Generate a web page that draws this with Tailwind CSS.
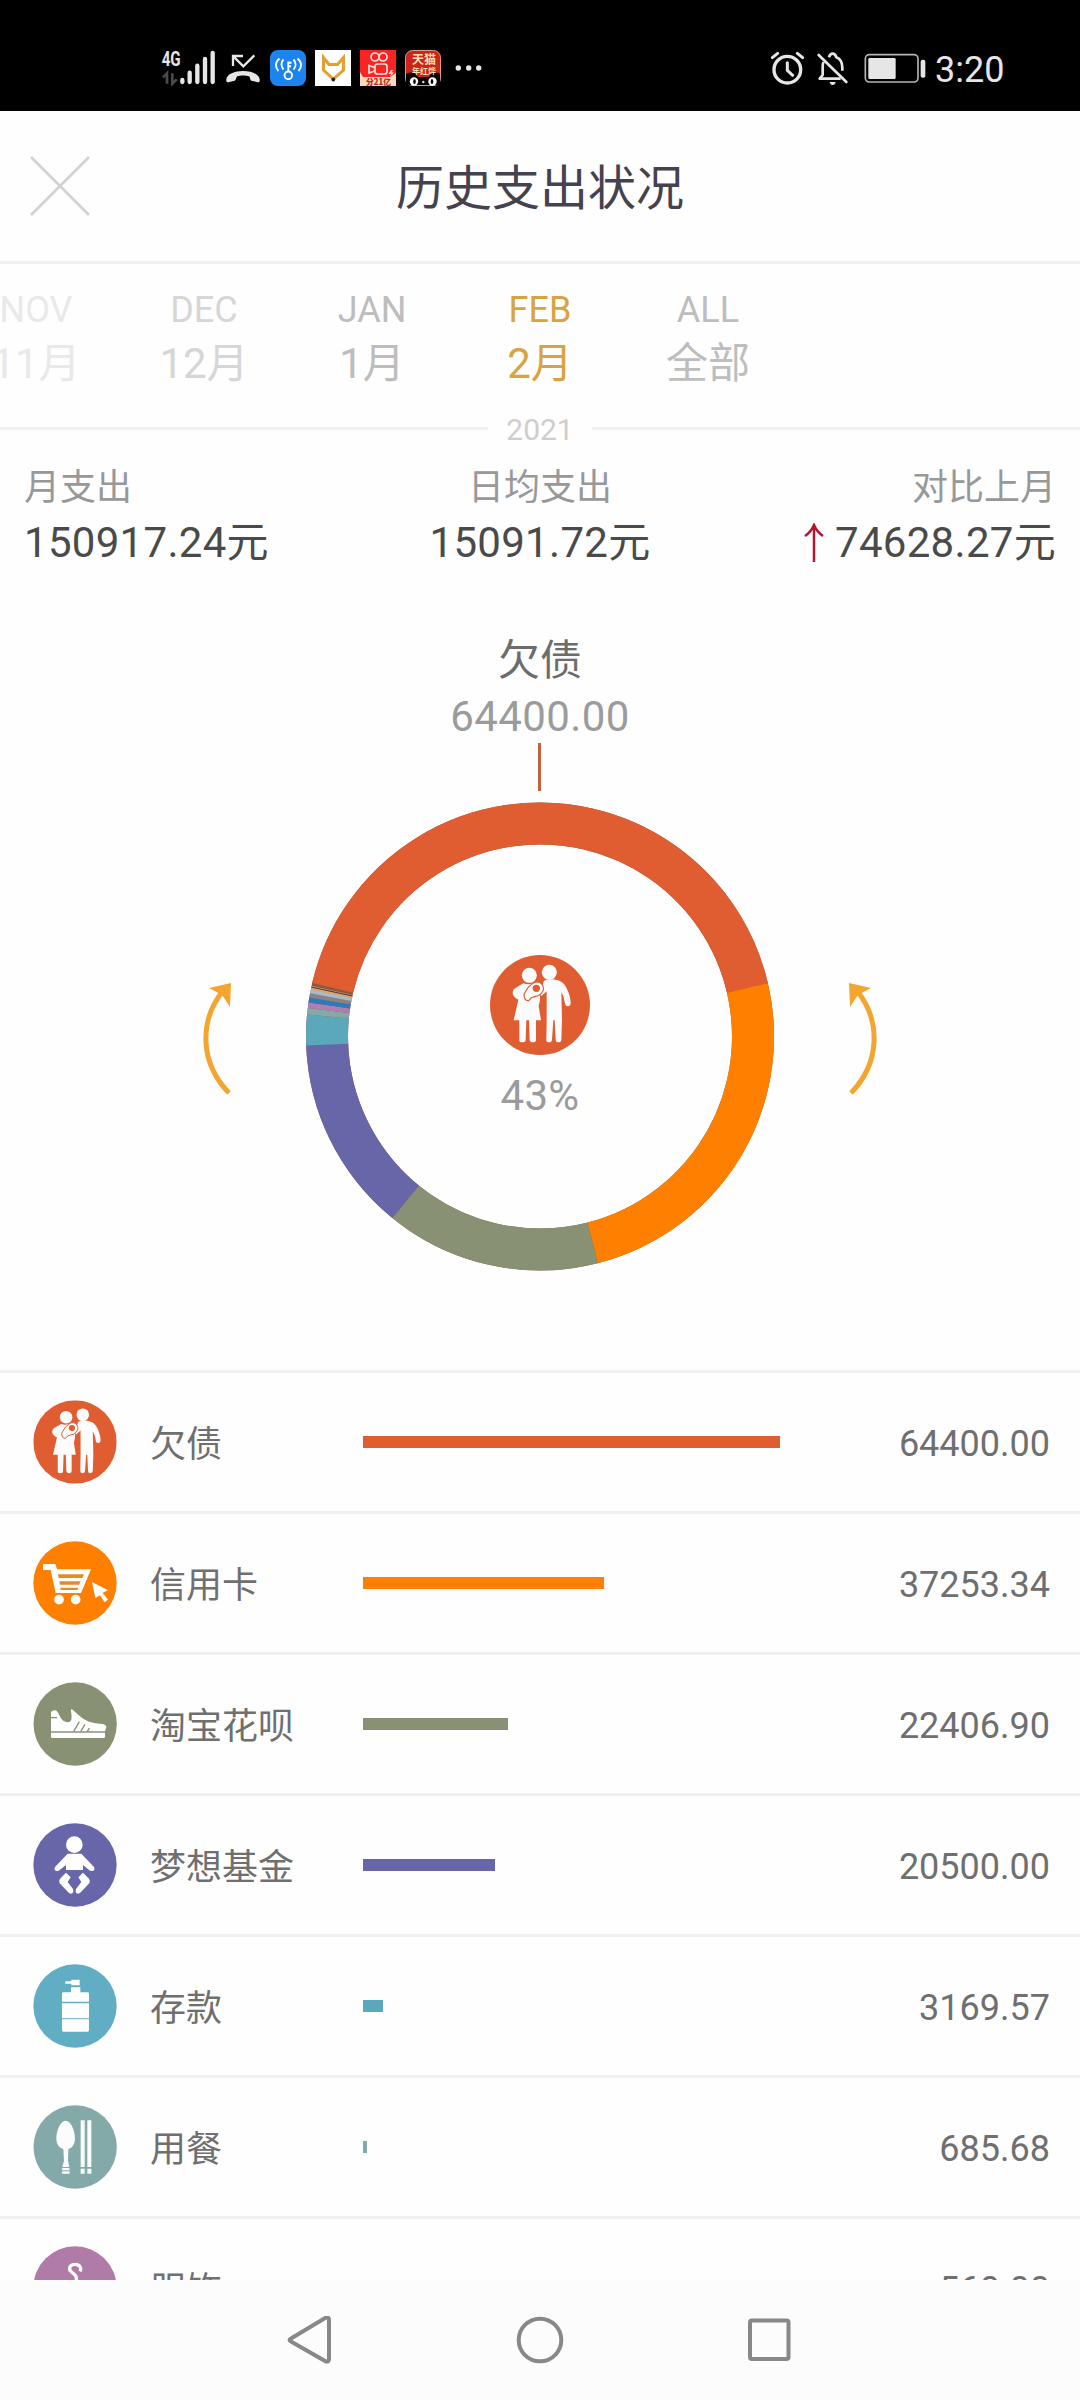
<!DOCTYPE html>
<html lang="zh">
<head>
<meta charset="utf-8">
<title>历史支出状况</title>
<script src="https://cdn.jsdelivr.net/npm/@tailwindcss/browser@4"></script>
</head>
<body class="bg-white">
<div class="flex h-[2400px] w-[1080px] flex-col overflow-hidden bg-[#fefefe] font-['Roboto','Noto_Sans_CJK_SC',sans-serif]">

  <!-- Status bar -->
  <header class="flex h-[111px] shrink-0 items-start bg-black pt-[50px] text-[#e6e6e6]">
    <svg class="ml-[160px] h-9 w-[56px]" viewBox="60 60 168 108">
      <text x="65" y="107" font-family="Roboto" font-weight="700" font-size="60" textLength="57" lengthAdjust="spacingAndGlyphs" fill="#e6e6e6">4G</text>
      <path d="M69 142 81 130V161M97 130V161L110 148" fill="none" stroke="#4a4a4a" stroke-width="8"/>
      <g stroke="#e6e6e6" stroke-width="13" stroke-linecap="round"><path d="M127 150V156M149 128V156M172 107V156M195 87V156M218 69V156"/></g>
    </svg>
    <svg class="ml-[9px] h-9 w-[36px]" viewBox="256 60 108 108">
      <path d="M280 108V78H310M281 79 311 109 344 76" fill="none" stroke="#e6e6e6" stroke-width="7"/>
      <path d="M260 148C262 132 285 123 310 123S358 132 360 148C361 158 357 158 351 156L335 152C330 150 332 141 328 139C318 136 302 136 293 139C289 141 290 150 285 152L269 156C262 158 259 156 260 148Z" fill="#e6e6e6"/>
    </svg>
    <svg class="ml-[9px] size-9" viewBox="0 0 36 36">
      <rect width="36" height="36" rx="8" fill="#1b84ee"/>
      <g fill="none" stroke="#fff" stroke-width="1.9"><circle cx="18.3" cy="25.3" r="3.8"/><path d="M18.3 21.5V11.5M18.3 12.8H21.5M18.3 16.3H21M13.500 9.500C10.800 12 10.800 16.500 13.500 19.500M9.500 8.500C5 12 5 17.500 8.500 21M23.500 9.500C26.200 12.500 26.200 16.500 23.500 19.500M27.500 8.500C32 12 32 17.500 28.500 21"/></g>
    </svg>
    <svg class="ml-[9px] size-9" viewBox="0 0 36 36">
      <rect width="36" height="36" fill="#fff"/>
      <path d="M8.500 7.500V20L18.300 29 28.500 20V7.500L22.500 14.500H14Z" fill="none" stroke="#e2a02f" stroke-width="3"/><circle cx="18.300" cy="29.500" r="1.900" fill="#222"/>
    </svg>
    <svg class="ml-[9px] size-9" viewBox="0 0 36 36">
      <rect width="36" height="36" fill="#fb2424"/>
      <g fill="none" stroke="#ffe4dc" stroke-width="1.700"><circle cx="15" cy="7" r="4"/><circle cx="23" cy="7" r="4"/><rect x="15" y="14" width="12" height="10" rx="2.500"/><path d="M14.500 17.500 9 15.500V23L14.500 21"/></g>
      <path d="M31 20 28.500 24H31L30 27 34 22.500H31.500L33 20Z" fill="#ffe4dc"/>
      <path d="M0 22 3 27H30L36 23V36H0Z" fill="#fbd9bd"/>
      <text x="6" y="35" font-family="Noto Sans CJK SC" font-weight="900" font-size="8.500" textLength="25" lengthAdjust="spacingAndGlyphs" fill="#c0281a">分21亿</text>
    </svg>
    <svg class="ml-[9px] size-9" viewBox="0 0 36 36">
      <rect x=".5" y=".5" width="35" height="35" rx="7" fill="#cb2419" stroke="#dd9b80"/>
      <path d="M1 24Q9 20 13 27H24Q27 20 35 24V32Q35 35 31 35H5Q1 35 1 32Z" fill="#080303"/>
      <text x="7" y="14" font-family="Noto Sans CJK SC" font-weight="700" font-size="12.500" textLength="24" lengthAdjust="spacingAndGlyphs" fill="#f7ddb0">天猫</text>
      <text x="7" y="24" font-family="Noto Sans CJK SC" font-weight="700" font-size="8.500" textLength="24" lengthAdjust="spacingAndGlyphs" fill="#f7ddb0">年红烨</text>
      <circle cx="9" cy="31.500" r="4.200" fill="#fff"/><circle cx="27.500" cy="31.500" r="4.200" fill="#fff"/><ellipse cx="9.500" cy="31.500" rx="1.300" ry="2.500"/><ellipse cx="27" cy="31.500" rx="1.300" ry="2.500"/><circle cx="18.300" cy="32" r="1.200" fill="#ddd"/>
    </svg>
    <svg class="ml-[13px] h-9 w-[30px]" viewBox="0 0 30 36" fill="#e6e6e6"><circle cx="4.300" cy="18" r="2.700"/><circle cx="14.700" cy="18" r="2.700"/><circle cx="24.700" cy="18" r="2.700"/></svg>

    <svg class="ml-[285px] h-9 w-[36px]" viewBox="87 60 108 108" fill="none" stroke="#e6e6e6">
      <circle cx="142" cy="119" r="40" stroke-width="10"/><path d="M142 98V121L158 136M97 83 113 70M188 83 172 70" stroke-width="9" stroke-linecap="round"/>
    </svg>
    <svg class="ml-[9px] h-9 w-[36px]" viewBox="222 60 108 108" fill="none" stroke="#e6e6e6" stroke-width="8">
      <path d="M250 96Q248 103 248 112V135L239 146H302M267 82Q270 71 278 71T289 82Q306 88 307 112V122" stroke-linejoin="round"/><path d="M236 75 319 156" stroke-linecap="round"/><path d="M269 156H287Q285 165 278 165T269 156Z" fill="#e6e6e6" stroke="none"/>
    </svg>
    <svg class="ml-[13px] h-9 w-[63px]" viewBox="370 60 189 108">
      <rect x="377" y="74" width="158" height="82" rx="12" fill="none" stroke="#b4b4b4" stroke-width="5"/><rect x="386" y="84" width="82" height="63" rx="4" fill="#e6e6e6"/><rect x="543" y="89" width="14" height="54" rx="6" fill="#e6e6e6"/>
    </svg>
    <span class="ml-[9px] pt-px text-[36px] leading-[39px]">3:20</span>
  </header>

  <!-- Title bar -->
  <div class="grid h-[153px] shrink-0 grid-cols-[120px_1fr_120px] items-center border-b-3 border-[#f0f0f0]">
    <svg class="ml-[30px] size-[60px]" viewBox="0 0 60 60" stroke="#d2d2d2" stroke-width="2.500"><path d="M1 1 59 59M59 1 1 59"/></svg>
    <h1 class="pt-[6px] text-center text-[48px] leading-[60px] text-[#454250]">历史支出状况</h1>
  </div>

  <!-- Month picker -->
  <nav class="-ml-12 flex h-[147px] w-[840px] shrink-0 pt-[28px] text-center text-[42px] leading-[71px] text-[#bdbdbd]">
    <div class="w-[168px] shrink-0 text-[#e9e9e9]"><p class="text-[36px] leading-[36px]">NOV</p><p>11月</p></div>
    <div class="w-[168px] shrink-0 text-[#d6d6d6]"><p class="text-[36px] leading-[36px]">DEC</p><p>12月</p></div>
    <div class="w-[168px] shrink-0"><p class="text-[36px] leading-[36px]">JAN</p><p>1月</p></div>
    <div class="w-[168px] shrink-0 text-[#d7a441]"><p class="text-[36px] leading-[36px]">FEB</p><p>2月</p></div>
    <div class="w-[168px] shrink-0"><p class="text-[36px] leading-[36px]">ALL</p><p>全部</p></div>
  </nav>
  <div class="flex h-[35px] shrink-0 items-center">
    <div class="h-[3px] flex-1 bg-[#f0f0f0]"></div>
    <span class="w-[104px] pt-[2px] text-center text-[30px] leading-[33px] text-[#d3cccc]">2021</span>
    <div class="h-[3px] flex-1 bg-[#f0f0f0]"></div>
  </div>

  <!-- Totals -->
  <section class="grid h-[133px] shrink-0 grid-cols-3 px-6 pt-[24px] text-[42px] leading-[73px] text-[#4a4a4a]">
    <div><p class="text-[36px] leading-[36px] text-[#989898]">月支出</p><p class="tracking-[.3px]">150917.24元</p></div>
    <div class="text-center"><p class="text-[36px] leading-[36px] text-[#989898]">日均支出</p><p class="tracking-[.3px]">15091.72元</p></div>
    <div class="text-right"><p class="text-[36px] leading-[36px] text-[#989898]">对比上月</p>
      <p class="flex items-center justify-end gap-[10px] tracking-[.3px]"><svg class="h-[40px] w-[22px]" viewBox="0 0 22 40" fill="none" stroke="#b5162d" stroke-width="2.500"><path d="M11 39V3M2 13Q8 9 11 2Q14 9 20 13"/></svg>74628.27元</p></div>
  </section>

  <!-- Donut chart -->
  <section class="flex h-[791px] shrink-0 flex-col items-center pt-[61px]">
    <p class="text-[42px] leading-[42px] text-[#6c6c6c]">欠债</p>
    <p class="mt-[16px] text-[42px] leading-[38px] tracking-[.4px] text-[#9b9b9b]">64400.00</p>
    <div class="mt-[7px] mr-px h-12 w-[3px] bg-[#c5603c]"></div>
    <div class="mt-[11px] flex items-center gap-[73px]">
      <svg class="mt-[5px] h-[114px] w-[30px]" viewBox="0 0 30 114"><path d="M26 111C-3 81 -4 40 19 10" fill="none" stroke="#f3a530" stroke-width="5"/><path d="M28 1 27 25 19 13 6 6Z" fill="#f3a530"/></svg>
      <div class="grid h-[469px] w-[468px]">
        <svg class="col-start-1 row-start-1 h-[469px] w-[468px]" viewBox="0 0 468 469">
          <g transform="rotate(-166.800 234 234.500)" fill="none" stroke-width="42">
            <circle cx="234" cy="234.500" r="213" pathLength="360" stroke="#8a5a3c"/>
            <circle cx="234" cy="234.500" r="213" pathLength="360" stroke="#df5d31" stroke-dasharray="153.620 360"/>
            <circle cx="234" cy="234.500" r="213" pathLength="360" stroke="#ff8000" stroke-dasharray="88.870 360" stroke-dashoffset="-153.620"/>
            <circle cx="234" cy="234.500" r="213" pathLength="360" stroke="#899175" stroke-dasharray="53.450 360" stroke-dashoffset="-242.490"/>
            <circle cx="234" cy="234.500" r="213" pathLength="360" stroke="#6666a8" stroke-dasharray="48.900 360" stroke-dashoffset="-295.940"/>
            <circle cx="234" cy="234.500" r="213" pathLength="360" stroke="#5ca8bb" stroke-dasharray="7.560 360" stroke-dashoffset="-344.600"/>
            <circle cx="234" cy="234.500" r="213" pathLength="360" stroke="#83aaa9" stroke-dasharray="1.640 360" stroke-dashoffset="-352.160"/>
            <circle cx="234" cy="234.500" r="213" pathLength="360" stroke="#b07fb0" stroke-dasharray="1.400 360" stroke-dashoffset="-353.800"/>
            <circle cx="234" cy="234.500" r="213" pathLength="360" stroke="#2d7bb8" stroke-dasharray="1.300 360" stroke-dashoffset="-355.150"/>
            <circle cx="234" cy="234.500" r="213" pathLength="360" stroke="#8a8288" stroke-dasharray="1.100 360" stroke-dashoffset="-356.400"/>
            <circle cx="234" cy="234.500" r="213" pathLength="360" stroke="#a5bccb" stroke-dasharray="1 360" stroke-dashoffset="-357.400"/>
            <circle cx="234" cy="234.500" r="213" pathLength="360" stroke="#e3a468" stroke-dasharray=".600 360" stroke-dashoffset="-358.300"/>
            <circle cx="234" cy="234.500" r="213" pathLength="360" stroke="#4b4048" stroke-dasharray=".300 360" stroke-dashoffset="-358.850"/>
            <circle cx="234" cy="234.500" r="213" pathLength="360" stroke="#c79a80" stroke-dasharray=".150 360" stroke-dashoffset="-359.150"/>
          </g>
        </svg>
        <div class="col-start-1 row-start-1 flex flex-col items-center pt-[153px]">
          <svg class="size-[100px]" viewBox="60 75 300 300">
            <symbol id="family" viewBox="60 75 300 300">
              <circle cx="210" cy="225" r="150" fill="#df5d31"/>
              <g fill="#fcfcfc">
                <circle cx="178" cy="136" r="22.500"/><circle cx="238" cy="127" r="22.500"/>
                <path d="M160 160Q178 167 196 157L210 165V210L206 228 213 271H198V329Q198 337 189 337T179 329L177 271H169L167 329Q167 337 157 337T148 329V271H131L145 209Q128 200 128 188T143 170Z"/>
                <path d="M222 152Q240 145 262 150Q282 155 290 175Q302 200 302 220Q301 229 294 229T285 221Q283 200 274 186L276 271 274 329Q273 337 265 337T257 329L254 271H250L246 329Q245 337 237 337T229 329L230 271V184L214 198 208 190Z"/>
                <path d="M162 193Q174 168 190 159Q206 150 216 163T214 190Q206 199 194 200L184 203 176 212Q166 213 163 203Z" stroke="#df5d31" stroke-width="3.500"/>
              </g>
              <circle cx="199" cy="175" r="11" fill="#df5d31"/>
            </symbol>
            <use href="#family" x="60" y="75" width="300" height="300"/>
          </svg>
          <p class="mt-[22px] text-[42px] leading-[38px] tracking-[.3px] text-[#9b9b9b]">43%</p>
        </div>
      </div>
      <svg class="mt-[5px] h-[114px] w-[30px] -scale-x-100" viewBox="0 0 30 114"><path d="M26 111C-3 81 -4 40 19 10" fill="none" stroke="#f3a530" stroke-width="5"/><path d="M28 1 27 25 19 13 6 6Z" fill="#f3a530"/></svg>
    </div>
  </section>

  <!-- Category list -->
  <main class="min-h-0 flex-1 overflow-hidden text-[36px] leading-[40px] text-[#6f6f6f]">
    <div class="flex h-[141px] items-center border-t-3 border-[#f0f0f0] pr-[30px] pl-[33px]">
      <svg class="size-[84px]" viewBox="59 74 302 302"><use href="#family" x="60" y="75" width="300" height="300"/></svg>
      <span class="ml-[33px] w-[213px] pt-[6px]">欠债</span>
      <div class="flex-1"><div class="h-3 bg-[#df5d31]" style="width:417px"></div></div>
      <span class="pt-[4px]">64400.00</span>
    </div>
    <div class="flex h-[141px] items-center border-t-3 border-[#f0f0f0] pr-[30px] pl-[33px]">
      <svg class="size-[84px]" viewBox="99 543 252 252">
        <circle cx="225" cy="669" r="125" fill="#ff8000"/>
        <path d="M129 612H166L171 628H273L243 699H167L152 630H129Z" fill="#fff"/>
        <path d="M174 643H252L247 654H176ZM178 664H242L237 674H180ZM181 683H234L233 690H182Z" fill="#e58a28"/>
        <circle cx="177" cy="719" r="14.500" fill="#fff"/><circle cx="227" cy="719" r="14.500" fill="#fff"/>
        <path d="M276 666 324 691 308 698 324 719 314 727 300 706 286 714Z" fill="#fff"/>
      </svg>
      <span class="ml-[33px] w-[213px] pt-[6px]">信用卡</span>
      <div class="flex-1"><div class="h-3 bg-[#ff8000]" style="width:241px"></div></div>
      <span class="pt-[4px]">37253.34</span>
    </div>
    <div class="flex h-[141px] items-center border-t-3 border-[#f0f0f0] pr-[30px] pl-[33px]">
      <svg class="size-[84px]" viewBox="99 65 252 252">
        <circle cx="225.500" cy="191" r="125" fill="#899175"/>
        <path d="M153 155Q156 149 168 150C180 160 180 186 204 186C222 184 212 160 213 147Q217 146 222 152C250 178 264 188 300 190Q319 191 319 200L315 213H153Z" fill="#fff"/>
        <path d="M153 217H315V230Q315 233 311 233H157Q153 233 153 230Z" fill="#fff"/>
        <path d="M153 172H171M238 184 221 214M255 192 242 214M268 203 262 214" stroke="#899175" stroke-width="4"/>
      </svg>
      <span class="ml-[33px] w-[213px] pt-[6px]">淘宝花呗</span>
      <div class="flex-1"><div class="h-3 bg-[#899175]" style="width:145px"></div></div>
      <span class="pt-[4px]">22406.90</span>
    </div>
    <div class="flex h-[141px] items-center border-t-3 border-[#f0f0f0] pr-[30px] pl-[33px]">
      <svg class="size-[84px]" viewBox="99 488 252 252">
        <circle cx="225" cy="614" r="125" fill="#6666a8"/>
        <g fill="#fff"><circle cx="223" cy="553" r="25"/>
        <path d="M203 580H244L282 620Q286 630 278 632L270 631 249 614V629H198V614L176 631Q166 635 163 627L165 620Z"/>
        <path d="M198 637 212 651 203 665 219 686Q223 699 213 700L207 698 179 669Q176 660 180 655Z"/><path d="M249 637 235 651 244 665 228 686Q224 699 234 700L240 698 268 669Q271 660 267 655Z"/></g>
      </svg>
      <span class="ml-[33px] w-[213px] pt-[6px]">梦想基金</span>
      <div class="flex-1"><div class="h-3 bg-[#6666a8]" style="width:132px"></div></div>
      <span class="pt-[4px]">20500.00</span>
    </div>
    <div class="flex h-[141px] items-center border-t-3 border-[#f0f0f0] pr-[30px] pl-[33px]">
      <svg class="size-[84px]" viewBox="99 11 252 252">
        <circle cx="225" cy="137" r="125" fill="#60adc4"/>
        <path d="M196 63H214V58H239V75H214V70H196ZM213 81H241V96H263Q267 96 267 100V124H186V100Q186 96 190 96H213ZM186 129H267V174H186ZM186 177H267V210Q267 214 263 214H190Q186 214 186 210Z" fill="#fff"/>
      </svg>
      <span class="ml-[33px] w-[213px] pt-[6px]">存款</span>
      <div class="flex-1"><div class="h-3 bg-[#5ca8bb]" style="width:20px"></div></div>
      <span class="pt-[4px]">3169.57</span>
    </div>
    <div class="flex h-[141px] items-center border-t-3 border-[#f0f0f0] pr-[30px] pl-[33px]">
      <svg class="size-[84px]" viewBox="99 435 252 252">
        <circle cx="225.500" cy="561" r="125" fill="#83aaa9"/>
        <g fill="#fbfdfd"><path d="M197 482C213 482 225 512 225 534C225 554 215 565 205 567L204 602 208 621H187L192 602 190 567C178 564 169 554 169 534C169 512 181 482 197 482Z"/>
        <path d="M187 624H208L209 631H186ZM186 634H209V641H186ZM242 481H254V621H242ZM262 481H274V621H262ZM242 626H254V641H242ZM262 626H274V641H262Z"/></g>
      </svg>
      <span class="ml-[33px] w-[213px] pt-[6px]">用餐</span>
      <div class="flex-1"><div class="h-3 bg-[#83aaa9]" style="width:4px"></div></div>
      <span class="pt-[4px]">685.68</span>
    </div>
    <div class="flex h-[141px] items-center border-t-3 border-[#f0f0f0] pr-[30px] pl-[33px]">
      <svg class="size-[84px]" viewBox="99 858 252 252">
        <circle cx="225" cy="984" r="125" fill="#b07ba6"/>
        <path d="M211 934C205 920 213 913 226 913C240 913 245 925 240 934M211 930C214 943 229 940 229 955V962L150 1018H300L229 962" fill="none" stroke="#fff" stroke-width="10"/>
      </svg>
      <span class="ml-[33px] w-[213px] pt-[6px]">服饰</span>
      <div class="flex-1"><div class="h-3 bg-[#b07ba6]" style="width:4px"></div></div>
      <span class="pt-[4px]">560.00</span>
    </div>
  </main>

  <!-- System navigation -->
  <footer class="flex h-[120px] shrink-0 items-center justify-center gap-[181px] bg-[#fcfcfc]">
    <svg class="size-12" viewBox="0 0 48 48" fill="none" stroke="#888" stroke-width="4"><path d="M5 22.500 40 1.500Q43 1 43 4V43Q43 46 40 45.500L5 25.500Q2 24 5 22.500Z" transform="translate(-1 0)"/></svg>
    <svg class="size-12" viewBox="0 0 48 48" fill="none" stroke="#888" stroke-width="4"><circle cx="24" cy="24" r="21.300"/></svg>
    <svg class="size-12" viewBox="0 0 48 48" fill="none" stroke="#888" stroke-width="4"><rect x="5" y="4.500" width="38.500" height="38.500" rx="2"/></svg>
  </footer>
</div>
</body>
</html>
